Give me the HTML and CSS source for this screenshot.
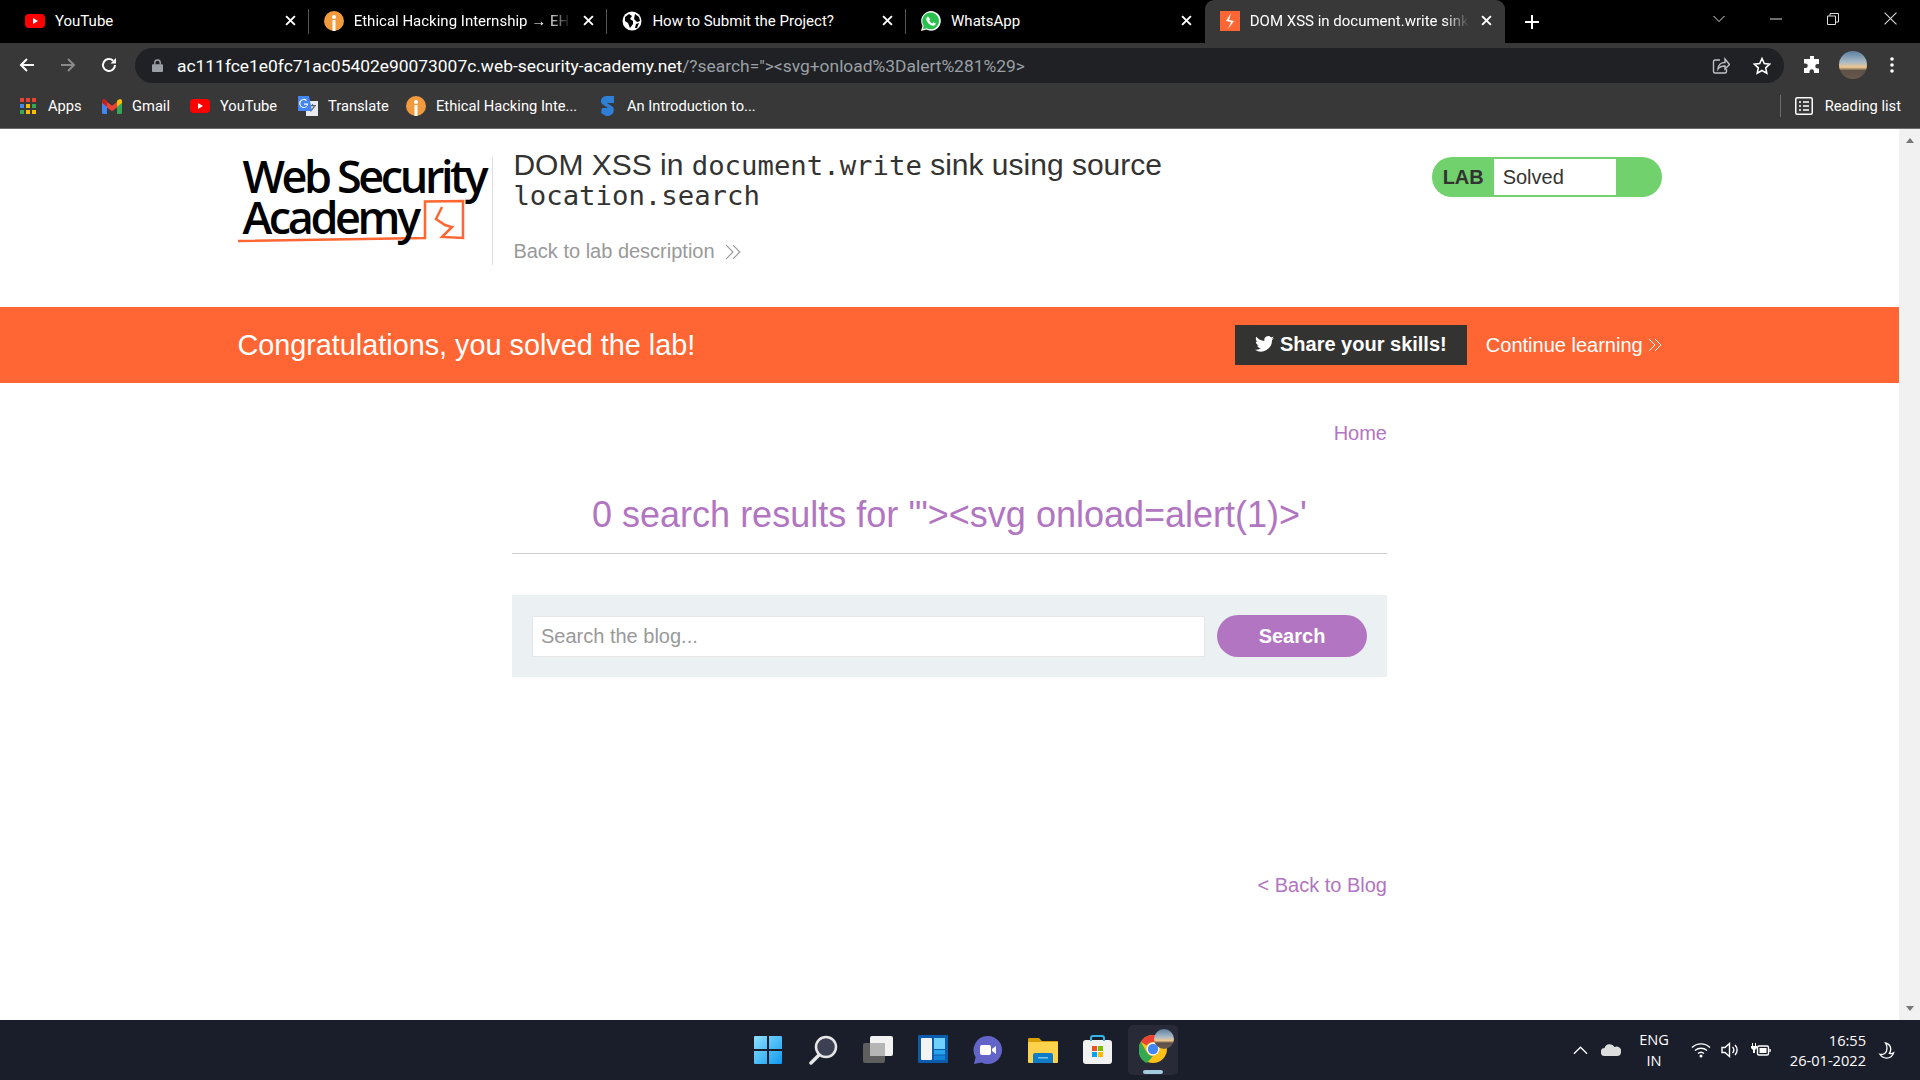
FILE: index.html
```html
<!DOCTYPE html>
<html lang="en">
<head>
    <meta charset="UTF-8">
    <meta name="viewport" content="width=device-width, initial-scale=1.0">
    <title>DOM XSS in document.write sink</title>
    <link rel="stylesheet" href="styles.css">
</head>
<body>

<div class="tabstrip">
    <div class="tab">
        <svg class="favicon" viewBox="0 0 20 20"><rect y="3" width="20" height="14" rx="4" fill="#f00"/><path d="M8 7l5 3-5 3z" fill="#fff"/></svg>
        <span class="tab-title">YouTube</span>
        <svg class="tab-close" viewBox="0 0 10 10"><path d="M1 1l8 8M9 1l-8 8"/></svg>
    </div>
    <div class="tab">
        <svg class="favicon" viewBox="0 0 20 20"><circle cx="10" cy="10" r="10" fill="#f29a3e"/><circle cx="10" cy="6" r="2" fill="#fff"/><path d="M8.5 9h3v11h-3z" fill="#fff"/></svg>
        <span class="tab-title tab-title-fade">Ethical Hacking Internship → EH I</span>
        <svg class="tab-close" viewBox="0 0 10 10"><path d="M1 1l8 8M9 1l-8 8"/></svg>
    </div>
    <div class="tab">
        <svg class="favicon" viewBox="0 0 20 20"><circle cx="10" cy="10" r="9.5" fill="#fff"/><path d="M3 6l4-3 3 2-2 3 3 2 0 3-3 4-2-5-3-2zM13 3l4 3 1 4-3 1-3-3zM14 13l3-1-2 5-2 0z" fill="#000"/></svg>
        <span class="tab-title">How to Submit the Project?</span>
        <svg class="tab-close" viewBox="0 0 10 10"><path d="M1 1l8 8M9 1l-8 8"/></svg>
    </div>
    <div class="tab tab-before-active">
        <svg class="favicon" viewBox="0 0 20 20"><path d="M0 20l1.5-5.2A9.8 9.8 0 1 1 5.3 18.500z" fill="#fff"/><path d="M1.7 18.300l1-3.600A8.400 8.400 0 1 1 5.600 17.300z" fill="#29c04d"/><path d="M7 5.500c-.6 0-1.700 1-1.700 2.600 0 2.800 3.600 6.700 6.800 6.700 1.600 0 2.700-1.100 2.700-2.200l-2.300-1.300-1 1.100c-1.200-.3-2.800-1.900-3.200-3.200l1-1z" fill="#fff"/></svg>
        <span class="tab-title">WhatsApp</span>
        <svg class="tab-close" viewBox="0 0 10 10"><path d="M1 1l8 8M9 1l-8 8"/></svg>
    </div>
    <div class="tab tab-active">
        <svg class="favicon" viewBox="0 0 20 20"><rect width="20" height="20" fill="#ff6633"/><path d="M11 2L6 10l5 1-3 7 6-8-5-1z" fill="#fff"/></svg>
        <span class="tab-title tab-title-fade">DOM XSS in document.write sink</span>
        <svg class="tab-close" viewBox="0 0 10 10"><path d="M1 1l8 8M9 1l-8 8"/></svg>
    </div>
    <svg class="new-tab" viewBox="0 0 14 14"><path d="M7 0v14M0 7h14"/></svg>
    <div class="window-controls">
        <svg class="win-chevron" viewBox="0 0 12 8"><path d="M.5 1L6 6.5 11.500 1"/></svg>
        <svg class="win-min" viewBox="0 0 12 12"><path d="M0 6h12"/></svg>
        <svg class="win-max" viewBox="0 0 12 12"><path d="M.5 3h8v8.500h-8zM3 3V.5h8.500V9H8.500"/></svg>
        <svg class="win-close" viewBox="0 0 12 12"><path d="M.5.5l11 11M11.500.5l-11 11"/></svg>
    </div>
</div>

<div class="toolbar">
    <svg class="nav-btn" viewBox="0 0 16 16"><path d="M15 8H2M8 2L2 8l6 6"/></svg>
    <svg class="nav-btn nav-btn-off" viewBox="0 0 16 16"><path d="M1 8h13M8 2l6 6-6 6"/></svg>
    <svg class="nav-btn" viewBox="0 0 16 16"><path d="M14 8a6 6 0 1 1-1.800-4.300"/><path class="solid" d="M15 1v5.500H9.500z"/></svg>
    <div class="omnibox">
        <svg class="lock" viewBox="0 0 12 14"><rect y="5.500" width="12" height="8.500" rx="1" fill="#9aa0a6"/><path d="M3 6V4a3 3 0 0 1 6 0v2" fill="none" stroke="#9aa0a6" stroke-width="1.500"/></svg>
        <div class="url">ac111fce1e0fc71ac05402e90073007c.web-security-academy.net<span class="url-rest">/?search="&gt;&lt;svg+onload%3Dalert%281%29&gt;</span></div>
        <svg class="omni-icon" viewBox="0 0 18 18"><path d="M8 3H3a1.500 1.500 0 0 0-1.500 1.500v10A1.500 1.500 0 0 0 3 16h10a1.500 1.500 0 0 0 1.500-1.500V12M6 12c0-4 3-6.500 7-6.500V2l4.500 5.500L13 12V9c-3 0-5.500.5-7 3z"/></svg>
        <svg class="omni-icon omni-star" viewBox="0 0 18 18"><path d="M9 1.500l2.300 5 5.400.6-4 3.700 1.100 5.400L9 13.500l-4.800 2.700 1.100-5.400-4-3.700 5.400-.6z"/></svg>
    </div>
    <svg class="puzzle" viewBox="0 0 18 18"><path d="M7 1a2 2 0 0 1 4 0v2h5v5h-1.500a2.200 2.200 0 0 0 0 4.500H16V17h-5v-1.500a2.200 2.200 0 0 0-4.500 0V17H1v-5h1.500a2.200 2.200 0 0 0 0-4.500H1V3h6z" fill="#fff"/></svg>
    <div class="avatar"></div>
    <svg class="menu-dots" viewBox="0 0 4 16"><circle cx="2" cy="2" r="1.800"/><circle cx="2" cy="8" r="1.800"/><circle cx="2" cy="14" r="1.800"/></svg>
</div>

<div class="bookmarks">
    <div class="bookmark bookmark-apps">
        <svg class="bm-icon bm-apps" viewBox="0 0 16 16"><path fill="#ea4335" d="M0 0h4v4H0zM6 0h4v4H6zM12 0h4v4h-4z"/><path fill="#4285f4" d="M0 6h4v4H0z"/><path fill="#fbbc05" d="M6 6h4v4H6zM12 12h4v4h-4zM6 12h4v4H6z"/><path fill="#34a853" d="M12 6h4v4h-4zM0 12h4v4H0z"/></svg>
        Apps
    </div>
    <div class="bookmark bookmark-gmail">
        <svg class="bm-icon" viewBox="0 0 20 16"><path fill="#4285f4" d="M0 3v11.500A1.500 1.500 0 0 0 1.500 16H5V7z"/><path fill="#34a853" d="M15 7v9h3.500a1.500 1.500 0 0 0 1.500-1.500V3z"/><path fill="#ea4335" d="M5 9.500V4l5 3.800L15 4v5.500l-5 3.700z"/><path fill="#c5221f" d="M0 3a2 2 0 0 1 3.200-1.600L5 2.800v6L0 5z"/><path fill="#fbbc05" d="M20 3a2 2 0 0 0-3.200-1.600L15 2.800v6L20 5z"/></svg>
        Gmail
    </div>
    <div class="bookmark bookmark-yt">
        <svg class="bm-icon" viewBox="0 0 20 20"><rect y="3" width="20" height="14" rx="4" fill="#f00"/><path d="M8 7l5 3-5 3z" fill="#fff"/></svg>
        YouTube
    </div>
    <div class="bookmark bookmark-translate">
        <svg class="bm-icon" viewBox="0 0 20 20"><path fill="#e8eaed" d="M8 5h12v15H8z"/><path fill="#5f6368" d="M11 9h7v1.200h-7zM14 8h1v2h-1zM12 15l4-5 1 .8-4 5z"/><path fill="#4285f4" d="M0 0h11l3 15H0z"/><path fill="#fff" d="M6 4a3.500 3.500 0 1 0 3.200 4.800H6V7.500h4.200a4.500 4.500 0 1 1-1.300-3.300L8 5a3 3 0 0 0-2-1z"/></svg>
        Translate
    </div>
    <div class="bookmark bookmark-eh">
        <svg class="bm-icon" viewBox="0 0 20 20"><circle cx="10" cy="10" r="10" fill="#f29a3e"/><circle cx="10" cy="6" r="2" fill="#fff"/><path d="M8.500 9h3v11h-3z" fill="#fff"/></svg>
        Ethical Hacking Inte...
    </div>
    <div class="bookmark">
        <svg class="bm-icon bm-s" viewBox="0 0 14 20"><path fill="#2f7fd6" d="M13 0H5a5 5 0 0 0-4 8l6 4H1l-1 5 5 3h2a6 6 0 0 0 5-9L6 7h7z"/></svg>
        An Introduction to...
    </div>
    <div class="reading-list">
        <svg class="bm-icon" viewBox="0 0 18 18"><rect x=".75" y=".75" width="16.500" height="16.500" rx="1.500" fill="none" stroke="#fff" stroke-width="1.500"/><path stroke="#fff" stroke-width="1.500" d="M4 5h2M8 5h6M4 9h2M8 9h6M4 13h2M8 13h6"/></svg>
        Reading list
    </div>
</div>

<div class="viewport">
    <div class="page">
        <header class="lab-header">
            <div class="logo">
                <svg class="logo-mark" viewBox="0 0 232 46"><path d="M1 43L188 40V3.500L226 3V40L205 39L215 29L208 27L199 21L205 9" fill="none" stroke="#ff6633" stroke-width="2.500"/></svg>
                <div class="logo-line">Web Security</div>
                <div class="logo-line">Academy</div>
            </div>
            <div class="lab-title">
                <h2>DOM XSS in <code>document.write</code> sink using source <code>location.search</code></h2>
                <a class="back-link">Back to lab description
                    <svg class="chevrons" viewBox="0 0 14 14"><path d="M1 1l6 6-6 6M7 1l6 6-6 6"/></svg>
                </a>
            </div>
            <div class="lab-status">
                <span class="lab-tag">LAB</span>
                <span class="lab-solved">Solved</span>
            </div>
        </header>

        <div class="notification">
            <div class="notification-inner">
                <h4>Congratulations, you solved the lab!</h4>
                <a class="share-btn">
                    <svg class="twitter" viewBox="0 0 24 20"><path d="M24 2.400c-.9.400-1.800.7-2.800.8 1-.6 1.800-1.600 2.200-2.700-1 .6-2 1-3.100 1.200A4.900 4.900 0 0 0 11.900 6.200C7.800 6 4.200 4 1.700.9c-1.300 2.300-.6 5.200 1.500 6.600-.8 0-1.600-.2-2.200-.6 0 2.300 1.600 4.400 3.900 4.900-.7.200-1.500.2-2.200.1.600 2 2.400 3.400 4.600 3.400A9.900 9.900 0 0 1 0 17.300 14 14 0 0 0 21.500 4.900c1-.7 1.800-1.500 2.500-2.500z"/></svg>
                    Share your skills!
                </a>
                <a class="continue-link">Continue learning
                    <svg class="chevrons" viewBox="0 0 14 14"><path d="M1 1l6 6-6 6M7 1l6 6-6 6"/></svg>
                </a>
            </div>
        </div>

        <main class="blog">
            <div class="home-row"><a>Home</a></div>
            <h1>0 search results for '"&gt;&lt;svg onload=alert(1)&gt;'</h1>
            <hr>
            <form class="search-box">
                <input class="search-input" type="text" placeholder="Search the blog...">
                <button class="search-btn" type="button">Search</button>
            </form>
            <div class="back-row"><a>&lt; Back to Blog</a></div>
        </main>
    </div>
    <div class="scrollbar">
        <span class="arrow-up"></span>
        <span class="arrow-down"></span>
    </div>
</div>

<footer class="taskbar">
    <div class="task-icons">
        <svg class="task-icon" viewBox="0 0 30 30"><defs><linearGradient id="win" x1="0" y1="0" x2="1" y2="1"><stop offset="0" stop-color="#8fe0ff"/><stop offset="1" stop-color="#0f9bf0"/></linearGradient></defs><path fill="url(#win)" d="M1 2a1 1 0 0 1 1-1h12v13H1zM16 1h12a1 1 0 0 1 1 1v12H16zM1 16h13v13H2a1 1 0 0 1-1-1zM16 16h13v12a1 1 0 0 1-1 1H16z"/></svg>
        <svg class="task-icon" viewBox="0 0 30 30"><circle cx="18" cy="12" r="10" fill="#3c4052" stroke="#e6e6e6" stroke-width="2.500"/><path d="M11 20l-8 8" stroke="#e6e6e6" stroke-width="3.500" stroke-linecap="round"/></svg>
        <svg class="task-icon" viewBox="0 0 30 30"><rect x="0" y="8" width="22" height="20" rx="2" fill="#5e5e5e"/><rect x="7" y="1" width="23" height="20" rx="2" fill="#f2f2f2"/><rect x="7" y="8" width="15" height="13" fill="#b5b5b5"/></svg>
        <svg class="task-icon" viewBox="0 0 30 30"><rect width="30" height="28" rx="1" fill="#0b5cad"/><rect x="3" y="3" width="11" height="22" rx="1" fill="#f3f3f3"/><rect x="16" y="3" width="11" height="11" fill="#6fd0fb"/><rect x="16" y="15" width="11" height="4.500" fill="#29a4ec"/><rect x="16" y="20.500" width="11" height="4.500" fill="#1183d8"/></svg>
        <svg class="task-icon" viewBox="0 0 30 30"><path d="M15 1a14 14 0 1 1-6.500 26.400L1 29l1.600-6.800A14 14 0 0 1 15 1z" fill="#6264c8"/><rect x="7" y="10" width="11" height="10" rx="2" fill="#fff"/><path d="M19 14l4-3v8l-4-3z" fill="#fff"/></svg>
        <svg class="task-icon" viewBox="0 0 30 30"><path d="M0 4a1 1 0 0 1 1-1h10l3 3h16v6H0z" fill="#d99e00"/><rect y="7" width="30" height="21" rx="1" fill="#ffd24c"/><path d="M5 20a2 2 0 0 1 2-2h16a2 2 0 0 1 2 2v8H5z" fill="#0f7cc8"/><rect x="10" y="22" width="10" height="1.500" fill="#7cc4ef"/></svg>
        <svg class="task-icon" viewBox="0 0 30 30"><rect y="5" width="29" height="24" rx="3" fill="#f2f2f2"/><path d="M8 6V3a2 2 0 0 1 2-2h9a2 2 0 0 1 2 2v3" fill="none" stroke="#30b7e8" stroke-width="2"/><path fill="#f25022" d="M9 11h5v5H9z"/><path fill="#7fba00" d="M15 11h5v5h-5z"/><path fill="#00a4ef" d="M9 17h5v5H9z"/><path fill="#ffb900" d="M15 17h5v5h-5z"/></svg>
        <div class="chrome-tile">
            <svg class="chrome-icon" viewBox="0 0 28 28"><circle cx="14" cy="14" r="14" fill="#fbc116"/><path d="M14 0a14 14 0 0 1 12.100 7H14a7 7 0 0 0-6.100 3.500L1.900 7A14 14 0 0 1 14 0z" fill="#ea4335"/><path d="M1.900 7l6 10.500a7 7 0 0 0 6.100 3.500L8 28A14 14 0 0 1 1.900 7z" fill="#34a853"/><circle cx="14" cy="14" r="6.500" fill="#fff"/><circle cx="14" cy="14" r="5.200" fill="#4285f4"/></svg>
            <span class="chrome-avatar"></span>
            <span class="chrome-running"></span>
        </div>
    </div>
    <div class="tray">
        <svg class="tray-caret" viewBox="0 0 16 9"><path d="M1 8l7-7 7 7"/></svg>
        <svg class="tray-cloud" viewBox="0 0 20 12"><path d="M4 12a4 4 0 0 1-.5-8A5.500 5.500 0 0 1 13.500 3 4.500 4.500 0 0 1 20 8a4 4 0 0 1-4 4z" fill="#ddd"/></svg>
        <div class="tray-lang">ENG<br>IN</div>
        <svg class="tray-wifi" viewBox="0 0 20 16"><path d="M1 5.500a13 13 0 0 1 18 0M4 8.500a9 9 0 0 1 12 0M7 11.500a4.500 4.500 0 0 1 6 0"/><circle class="solid" cx="10" cy="14" r="1.500"/></svg>
        <svg class="tray-sound" viewBox="0 0 20 16"><path d="M1 5.500h3l4.500-4v13l-4.500-4H1zM11.500 5a4 4 0 0 1 0 6M14 3a7 7 0 0 1 0 10"/></svg>
        <svg class="tray-power" viewBox="0 0 20 16"><rect x="6.500" y="4" width="11" height="9" rx="1.500"/><path d="M19 7v3"/><path class="solid" d="M8.500 6h7v5h-7zM1 1v3H0v2l2 2v3h2V8l2-2V4H5V1H4v3H2V1z"/></svg>
        <div class="tray-clock">16:55<br>26-01-2022</div>
        <svg class="tray-moon" viewBox="0 0 18 18"><path d="M8 1c3.500 1 5.500 3.500 5.500 7 0 1.800-.8 3-1.500 4 1.500.5 3 .3 4.500-.5-1 3.200-4 5.500-7.500 5.500-2.500 0-5.500-1.500-7-4 3.500 1 7.500-1 7.500-6 0-2-.5-4.500-1.500-6z"/></svg>
    </div>
</footer>

</body>
</html>
```

FILE: styles.css
```css
* {
    box-sizing: border-box;
}

html, body {
    margin: 0;
    height: 100%;
    overflow: hidden;
}

body {
    display: flex;
    flex-direction: column;
    background-color: white;
    font-family: "Liberation Sans", Arial, sans-serif;
}

/* browser tabs */
.tabstrip {
    display: flex;
    align-items: center;
    flex: 0 0 43px;
    padding-left: 10px;
    background-color: black;
    color: white;
    font-family: Roboto, sans-serif;
    font-size: 15px;
}

.tab {
    display: flex;
    align-items: center;
    flex: 0 0 298.7px;
    min-width: 0;
    height: 43px;
    padding: 0 13px 2px 15px;
    position: relative;
}

.tab::after {
    content: "";
    position: absolute;
    right: 0;
    top: 9px;
    height: 25px;
    width: 1px;
    background-color: #555;
}

.tab-before-active::after,
.tab-active::after {
    display: none;
}

.tab-active {
    background-color: #383838;
    border-radius: 9px 9px 0 0;
    flex-basis: 300px;
}

.favicon {
    flex: 0 0 20px;
    height: 20px;
    margin-right: 10px;
}

.tab-title {
    flex: 1;
    min-width: 0;
    white-space: nowrap;
}

.tab-title-fade {
    -webkit-mask-image: linear-gradient(to left, transparent 0, black 24px);
    mask-image: linear-gradient(to left, transparent 0, black 24px);
}

.tab-close {
    flex: 0 0 11px;
    height: 11px;
    margin-left: 12px;
    fill: none;
    stroke: white;
    stroke-width: 1.8;
}

.new-tab {
    width: 14px;
    height: 14px;
    margin-left: 20px;
    fill: none;
    stroke: white;
    stroke-width: 2;
}

.window-controls {
    display: flex;
    align-items: center;
    margin-left: auto;
    height: 100%;
    padding-bottom: 6px;
}

.window-controls svg {
    fill: none;
    stroke: #ddd;
    stroke-width: 1;
}

.win-chevron {
    width: 12px;
    height: 8px;
    margin-right: 45px;
}

.win-min,
.win-max,
.win-close {
    width: 12px;
    height: 12px;
}

.win-min {
    margin-right: 45px;
}

.win-max {
    margin-right: 45px;
}

.win-close {
    width: 13px;
    height: 13px;
    margin-right: 23px;
}

/* address bar */
.toolbar {
    display: flex;
    align-items: center;
    flex: 0 0 44px;
    padding-left: 19px;
    background-color: #383838;
}

.nav-btn {
    flex: 0 0 16px;
    height: 16px;
    margin-right: 25px;
    fill: none;
    stroke: white;
    stroke-width: 2;
}

.nav-btn-off {
    stroke: #8a8a8a;
}

.nav-btn .solid {
    fill: white;
    stroke: none;
}

.omnibox {
    display: flex;
    align-items: center;
    width: 1649px;
    height: 35px;
    margin-left: -7px;
    margin-top: 1px;
    padding-left: 17px;
    padding-right: 13px;
    background-color: #202124;
    border-radius: 18px;
}

.lock {
    flex: 0 0 11px;
    height: 13px;
    margin-right: 14px;
}

.url {
    flex: 1;
    color: white;
    font-family: Roboto, sans-serif;
    font-size: 17.4px;
    white-space: nowrap;
}

.url-rest {
    color: #9aa0a6;
}

.omni-icon {
    flex: 0 0 18px;
    height: 18px;
    fill: none;
    stroke: #bdc1c6;
    stroke-width: 1.4;
}

.omni-star {
    margin-left: 23px;
    stroke: white;
    stroke-width: 1.6;
}

.puzzle {
    flex: 0 0 18px;
    height: 18px;
    margin-left: 19px;
}

.avatar {
    flex: 0 0 28px;
    height: 28px;
    margin-left: 18px;
    border-radius: 50%;
    background: linear-gradient(to bottom, #5c7f9e 0, #a9bac6 40%, #f0c78e 58%, #5b5048 70%, #6a5a4e 100%);
}

.menu-dots {
    flex: 0 0 4px;
    height: 16px;
    margin-left: 23px;
    fill: white;
}

/* bookmarks */
.bookmarks {
    display: flex;
    align-items: center;
    flex: 0 0 42px;
    padding: 0 0 3px 20px;
    background-color: #383838;
    border-bottom: 1px solid #6b6b6b;
    color: white;
    font-family: Roboto, sans-serif;
    font-size: 14.7px;
}

.bookmark {
    display: flex;
    align-items: center;
    white-space: nowrap;
}

.bm-icon {
    flex: 0 0 20px;
    width: 20px;
    height: 20px;
    margin-right: 10px;
}

.bm-apps {
    flex-basis: 16px;
    width: 16px;
    height: 16px;
    margin-right: 12px;
}

.bm-s {
    flex-basis: 14px;
    width: 14px;
    margin-right: 12px;
}

.bookmark-apps {
    width: 82px;
}

.bookmark-gmail {
    width: 88px;
}

.bookmark-yt {
    width: 108px;
}

.bookmark-translate {
    width: 108px;
}

.bookmark-eh {
    width: 195px;
}

.reading-list {
    display: flex;
    align-items: center;
    margin-left: auto;
    margin-right: 19px;
    padding-left: 14px;
    border-left: 1px solid #6b6b6b;
    height: 22px;
}

.reading-list .bm-icon {
    flex-basis: 18px;
    width: 18px;
    height: 18px;
    margin-right: 12px;
}

/* lab page */
.viewport {
    display: flex;
    flex: 1;
    min-height: 0;
}

.page {
    flex: 1;
    min-width: 0;
}

.scrollbar {
    display: flex;
    flex-direction: column;
    justify-content: space-between;
    align-items: center;
    flex: 0 0 21px;
    padding: 9px 0;
    background-color: #f1f1f1;
}

.arrow-up {
    border: 4px solid transparent;
    border-top: 0;
    border-bottom: 5px solid #777;
}

.arrow-down {
    border: 4px solid transparent;
    border-bottom: 0;
    border-top: 5px solid #777;
}

.lab-header {
    display: flex;
    width: 75%;
    height: 178px;
    margin: 0 auto;
    padding-top: 28px;
    color: #333332;
}

.logo {
    position: relative;
    flex: 0 0 255px;
    height: 108px;
    margin-top: -2px;
    color: black;
    font-family: "Open Sans", sans-serif;
    font-weight: 600;
    font-size: 45px;
    line-height: 41px;
    letter-spacing: -3.4px;
    white-space: nowrap;
}

.logo-line {
    position: relative;
    padding-left: 5px;
}

.logo-mark {
    position: absolute;
    left: 0;
    top: 43px;
    width: 232px;
    height: 46px;
}

.lab-title {
    flex: 0 0 680px;
    height: 108px;
    padding-left: 20px;
    border-left: 1px solid #ddd;
}

.lab-title h2 {
    margin: -7px 0 0;
    font-size: 30px;
    font-weight: normal;
    line-height: 29px;
}

.lab-title code {
    font-family: "DejaVu Sans Mono", monospace;
    font-size: 27.3px;
}

.back-link {
    display: flex;
    align-items: center;
    margin-top: 30px;
    color: #999;
    font-size: 20px;
}

.chevrons {
    width: 16px;
    height: 16px;
    margin-left: 10px;
    fill: none;
    stroke: currentColor;
    stroke-width: 1;
}

.lab-status {
    display: flex;
    align-items: stretch;
    width: 230px;
    height: 40px;
    margin-left: auto;
    padding: 2px 46px 2px 0;
    background-color: #70d16d;
    border-radius: 20px;
    font-size: 20px;
    line-height: 36px;
}

.lab-tag {
    flex: 0 0 62px;
    padding-left: 11px;
    font-weight: bold;
}

.lab-solved {
    flex: 1;
    padding-left: 9px;
    background-color: white;
}

.notification {
    height: 76px;
    background-color: #ff6633;
    color: white;
}

.notification-inner {
    display: flex;
    align-items: center;
    width: 75%;
    height: 100%;
    margin: 0 auto;
}

.notification h4 {
    margin: 1px auto 0 0;
    font-size: 28.8px;
    font-weight: normal;
}

.share-btn {
    display: flex;
    align-items: center;
    justify-content: center;
    width: 232px;
    height: 40px;
    margin-right: 19px;
    padding-bottom: 2px;
    background-color: #333332;
    font-size: 20px;
    font-weight: bold;
}

.twitter {
    width: 19px;
    height: 16px;
    margin-right: 6px;
    fill: white;
}

.continue-link {
    display: flex;
    align-items: center;
    font-size: 20px;
}

.continue-link .chevrons {
    width: 14px;
    height: 16px;
    margin-left: 5px;
}

.blog {
    width: 875px;
    margin: 0 auto;
    color: #b175c1;
    font-size: 20px;
}

.home-row {
    margin-top: 39px;
    text-align: right;
}

.blog h1 {
    margin: 49px 0 0;
    font-size: 36px;
    font-weight: normal;
    text-align: center;
    line-height: 42px;
}

.blog hr {
    margin: 17px 0 0;
    border: 0;
    border-top: 1px solid #ccc;
}

.search-box {
    display: flex;
    align-items: center;
    margin-top: 41px;
    height: 82px;
    padding: 0 20px;
    background-color: #ebf0f2;
}

.search-input {
    flex: 1;
    height: 41px;
    padding: 0 8px;
    border: 1px solid #e6e6e6;
    background-color: white;
    font-family: inherit;
    font-size: 20px;
}

.search-input::placeholder {
    color: #999;
}

.search-btn {
    flex: 0 0 150px;
    height: 42px;
    margin-left: 12px;
    border: 0;
    border-radius: 25px;
    background-color: #b175c1;
    color: white;
    font-family: inherit;
    font-size: 20px;
    font-weight: bold;
}

.back-row {
    margin-top: 197px;
    text-align: right;
}

/* windows taskbar */
.taskbar {
    display: flex;
    justify-content: flex-end;
    align-items: center;
    position: relative;
    flex: 0 0 60px;
    background-color: #1a1e2b;
    color: white;
    font-family: "Open Sans", sans-serif;
    font-size: 14.6px;
}

.task-icons {
    position: absolute;
    left: 753px;
    top: 0;
    display: flex;
    align-items: center;
    height: 60px;
    gap: 25px;
}

.task-icon {
    flex: 0 0 30px;
    height: 30px;
}

.chrome-tile {
    position: relative;
    flex: 0 0 50px;
    height: 50px;
    margin-left: -10px;
    background-color: #282b37;
    border-radius: 5px;
}

.chrome-icon {
    position: absolute;
    left: 11px;
    top: 10px;
    width: 28px;
    height: 28px;
}

.chrome-avatar {
    position: absolute;
    left: 26px;
    top: 4px;
    width: 20px;
    height: 20px;
    border-radius: 50%;
    background: linear-gradient(to bottom, #5c7f9e 0, #a9bac6 40%, #f0c78e 58%, #5b5048 70%, #6a5a4e 100%);
}

.chrome-running {
    position: absolute;
    left: 15px;
    bottom: 1px;
    width: 20px;
    height: 4px;
    border-radius: 2px;
    background-color: #a3cbe0;
}

.tray {
    display: flex;
    align-items: center;
    height: 100%;
    padding-right: 25px;
}

.tray svg {
    fill: none;
    stroke: white;
    stroke-width: 1.4;
}

.tray svg .solid {
    fill: white;
    stroke: none;
}

.tray-caret {
    width: 15px;
    height: 9px;
    margin-right: 13px;
}

.tray svg.tray-cloud {
    width: 20px;
    height: 12px;
    margin-right: 15px;
    stroke: none;
}

.tray-lang {
    width: 36px;
    margin-right: 19px;
    text-align: center;
    line-height: 21px;
}

.tray-wifi,
.tray-sound,
.tray-power {
    width: 20px;
    height: 16px;
    margin-right: 10px;
}

.tray svg.tray-power {
    margin-right: 0;
}

.tray-clock {
    width: 95px;
    margin-right: 12px;
    text-align: right;
    line-height: 20px;
}

.tray-moon {
    width: 17px;
    height: 17px;
}
```
